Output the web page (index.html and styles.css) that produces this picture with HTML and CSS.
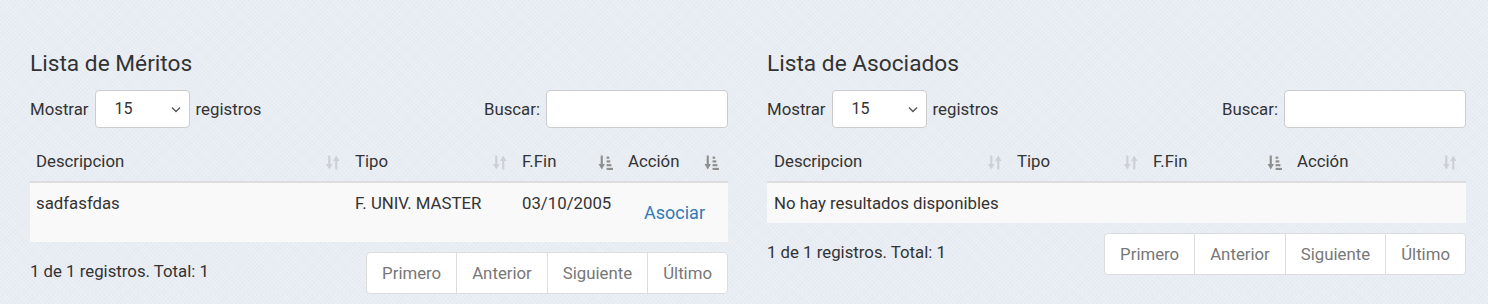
FILE: index.html
```html
<!DOCTYPE html>
<html lang="es">
<head>
    <meta charset="UTF-8">
    <title>Méritos y Asociados</title>
    <link rel="stylesheet" href="styles.css">
</head>
<body>
    <div class="page">
        <!-- Lista de meritos -->
        <section class="panel">
            <h3 class="panel-title">Lista de Méritos</h3>
            <div class="toolbar">
                <div class="length">
                    <span>Mostrar</span>
                    <div class="select"><span>15</span>
                        <svg width="10" height="7" viewBox="0 0 10 7"><path d="M1 1.5 L5 5.5 L9 1.5" fill="none" stroke="#555" stroke-width="1.4"/></svg>
                    </div>
                    <span>registros</span>
                </div>
                <div class="search">
                    <span>Buscar:</span>
                    <input type="text">
                </div>
            </div>
            <table class="grid grid-meritos">
                <colgroup>
                    <col style="width: 319px">
                    <col style="width: 167px">
                    <col style="width: 106px">
                    <col style="width: 106px">
                </colgroup>
                <thead>
                    <tr>
                        <th><div class="th">Descripcion <svg class="ico-sort" width="15" height="15" viewBox="0 0 14 14"><use href="#sort"/></svg></div></th>
                        <th><div class="th">Tipo <svg class="ico-sort" width="15" height="15" viewBox="0 0 14 14"><use href="#sort"/></svg></div></th>
                        <th><div class="th">F.Fin <svg class="ico-attr" width="15" height="15" viewBox="0 0 14 14"><use href="#attr"/></svg></div></th>
                        <th><div class="th">Acción <svg class="ico-attr" width="15" height="15" viewBox="0 0 14 14"><use href="#attr"/></svg></div></th>
                    </tr>
                </thead>
                <tbody>
                    <tr>
                        <td>sadfasfdas</td>
                        <td>F. UNIV. MASTER</td>
                        <td>03/10/2005</td>
                        <td><a class="btn-link" href="#">Asociar</a></td>
                    </tr>
                </tbody>
            </table>
            <div class="footer">
                <div class="info">1 de 1 registros. Total: 1</div>
                <ul class="pager">
                    <li>Primero</li>
                    <li>Anterior</li>
                    <li>Siguiente</li>
                    <li>Último</li>
                </ul>
            </div>
        </section>

        <!-- Lista de asociados -->
        <section class="panel">
            <h3 class="panel-title">Lista de Asociados</h3>
            <div class="toolbar">
                <div class="length">
                    <span>Mostrar</span>
                    <div class="select"><span>15</span>
                        <svg width="10" height="7" viewBox="0 0 10 7"><path d="M1 1.5 L5 5.5 L9 1.5" fill="none" stroke="#555" stroke-width="1.4"/></svg>
                    </div>
                    <span>registros</span>
                </div>
                <div class="search">
                    <span>Buscar:</span>
                    <input type="text">
                </div>
            </div>
            <table class="grid grid-asociados">
                <colgroup>
                    <col style="width: 244px">
                    <col style="width: 136px">
                    <col style="width: 144px">
                    <col style="width: 175px">
                </colgroup>
                <thead>
                    <tr>
                        <th><div class="th">Descripcion <svg class="ico-sort" width="15" height="15" viewBox="0 0 14 14"><use href="#sort"/></svg></div></th>
                        <th><div class="th">Tipo <svg class="ico-sort" width="15" height="15" viewBox="0 0 14 14"><use href="#sort"/></svg></div></th>
                        <th><div class="th">F.Fin <svg class="ico-attr" width="15" height="15" viewBox="0 0 14 14"><use href="#attr"/></svg></div></th>
                        <th><div class="th">Acción <svg class="ico-sort" width="15" height="15" viewBox="0 0 14 14"><use href="#sort"/></svg></div></th>
                    </tr>
                </thead>
                <tbody>
                    <tr>
                        <td colspan="4">No hay resultados disponibles</td>
                    </tr>
                </tbody>
            </table>
            <div class="footer">
                <div class="info">1 de 1 registros. Total: 1</div>
                <ul class="pager">
                    <li>Primero</li>
                    <li>Anterior</li>
                    <li>Siguiente</li>
                    <li>Último</li>
                </ul>
            </div>
        </section>
    </div>

    <!-- sort glyphs -->
    <svg width="0" height="0" class="defs">
        <symbol id="sort" viewBox="0 0 14 14">
            <path d="M4 0.5 V10" stroke="currentColor" stroke-width="2"/>
            <path d="M1 8.5 H7 L4 13.5 Z" fill="currentColor"/>
            <path d="M10.5 13.5 V4" stroke="currentColor" stroke-width="2"/>
            <path d="M7.5 5.5 H13.5 L10.5 0.5 Z" fill="currentColor"/>
        </symbol>
        <symbol id="attr" viewBox="0 0 14 14">
            <path d="M3.5 0.5 V10" stroke="currentColor" stroke-width="2"/>
            <path d="M0.5 8.5 H6.5 L3.5 13.5 Z" fill="currentColor"/>
            <rect x="8" y="1.5" width="2.5" height="2" fill="currentColor"/>
            <rect x="8" y="5" width="3.5" height="2" fill="currentColor"/>
            <rect x="8" y="8.5" width="4.5" height="2" fill="currentColor"/>
            <rect x="8" y="12" width="6" height="2" fill="currentColor"/>
        </symbol>
    </svg>
</body>
</html>
```

FILE: styles.css
```css
body {
    margin: 0;
    font-family: Roboto, "Liberation Sans", sans-serif;
    font-size: 16.8px;
    line-height: 24px;
    color: #333;
    background-color: #e8edf3;
    background-image:
        repeating-linear-gradient(45deg, rgba(255, 255, 255, 0.18) 0 1px, transparent 1px 3px),
        repeating-linear-gradient(-45deg, rgba(205, 212, 222, 0.14) 0 1px, transparent 1px 3px);
}
.page {
    display: grid;
    grid-template-columns: 698px 699px;
    column-gap: 39px;
    padding: 50px 22px 0 30px;
}
.panel-title {
    margin: 0;
    font-size: 22.7px;
    line-height: 28px;
    font-weight: 400;
    color: #333;
}
.toolbar {
    display: flex;
    justify-content: space-between;
    align-items: center;
    margin-top: 12px;
    height: 38px;
}
.length, .search {
    display: flex;
    align-items: center;
    gap: 6px;
}
.select {
    display: flex;
    align-items: center;
    justify-content: space-between;
    padding: 0 8px 0 19px;
    box-sizing: border-box;
    width: 95px;
    height: 38px;
    background: #fff;
    border: 1px solid #ccc;
    border-radius: 4px;
    font-size: 16px;
}
.search input {
    width: 182px;
    height: 38px;
    box-sizing: border-box;
    border: 1px solid #ccc;
    border-radius: 4px;
    background: #fff;
    margin: 0;
}
.grid {
    width: 100%;
    table-layout: fixed;
    border-collapse: collapse;
    margin-top: 13px;
}
.grid th, .grid td {
    padding: 8px 6px;
    text-align: left;
    vertical-align: top;
}
.grid th {
    font-weight: 400;
    border-bottom: 2px solid #ddd;
}
.th {
    display: flex;
    justify-content: space-between;
    align-items: center;
    padding-right: 3px;
}
.ico-sort {
    color: #cdd0d4;
    margin-top: 3px;
}
.ico-attr {
    color: #8e8e8e;
    margin-top: 3px;
}
.grid tbody tr {
    background: #f9f9f9;
}
.grid-asociados th:first-child, .grid-asociados td:first-child {
    padding-left: 7px;
}
.btn-link {
    display: inline-block;
    padding: 9px 15px 8px;
    border: 1px solid transparent;
    font-size: 18px;
    line-height: 24px;
    color: #337ab7;
    text-decoration: none;
}
.footer {
    display: flex;
    justify-content: space-between;
    align-items: flex-start;
    margin-top: 10px;
}
.info {
    padding-top: 7px;
}
.pager {
    display: flex;
    margin: 0;
    padding: 0;
    list-style: none;
    background: #fff;
    border: 1px solid #ddd;
    border-radius: 4px;
}
.pager li {
    padding: 8px 15px;
    color: #777;
    border-left: 1px solid #ddd;
}
.pager li:first-child {
    border-left: 0;
}
.defs {
    position: absolute;
}
```
